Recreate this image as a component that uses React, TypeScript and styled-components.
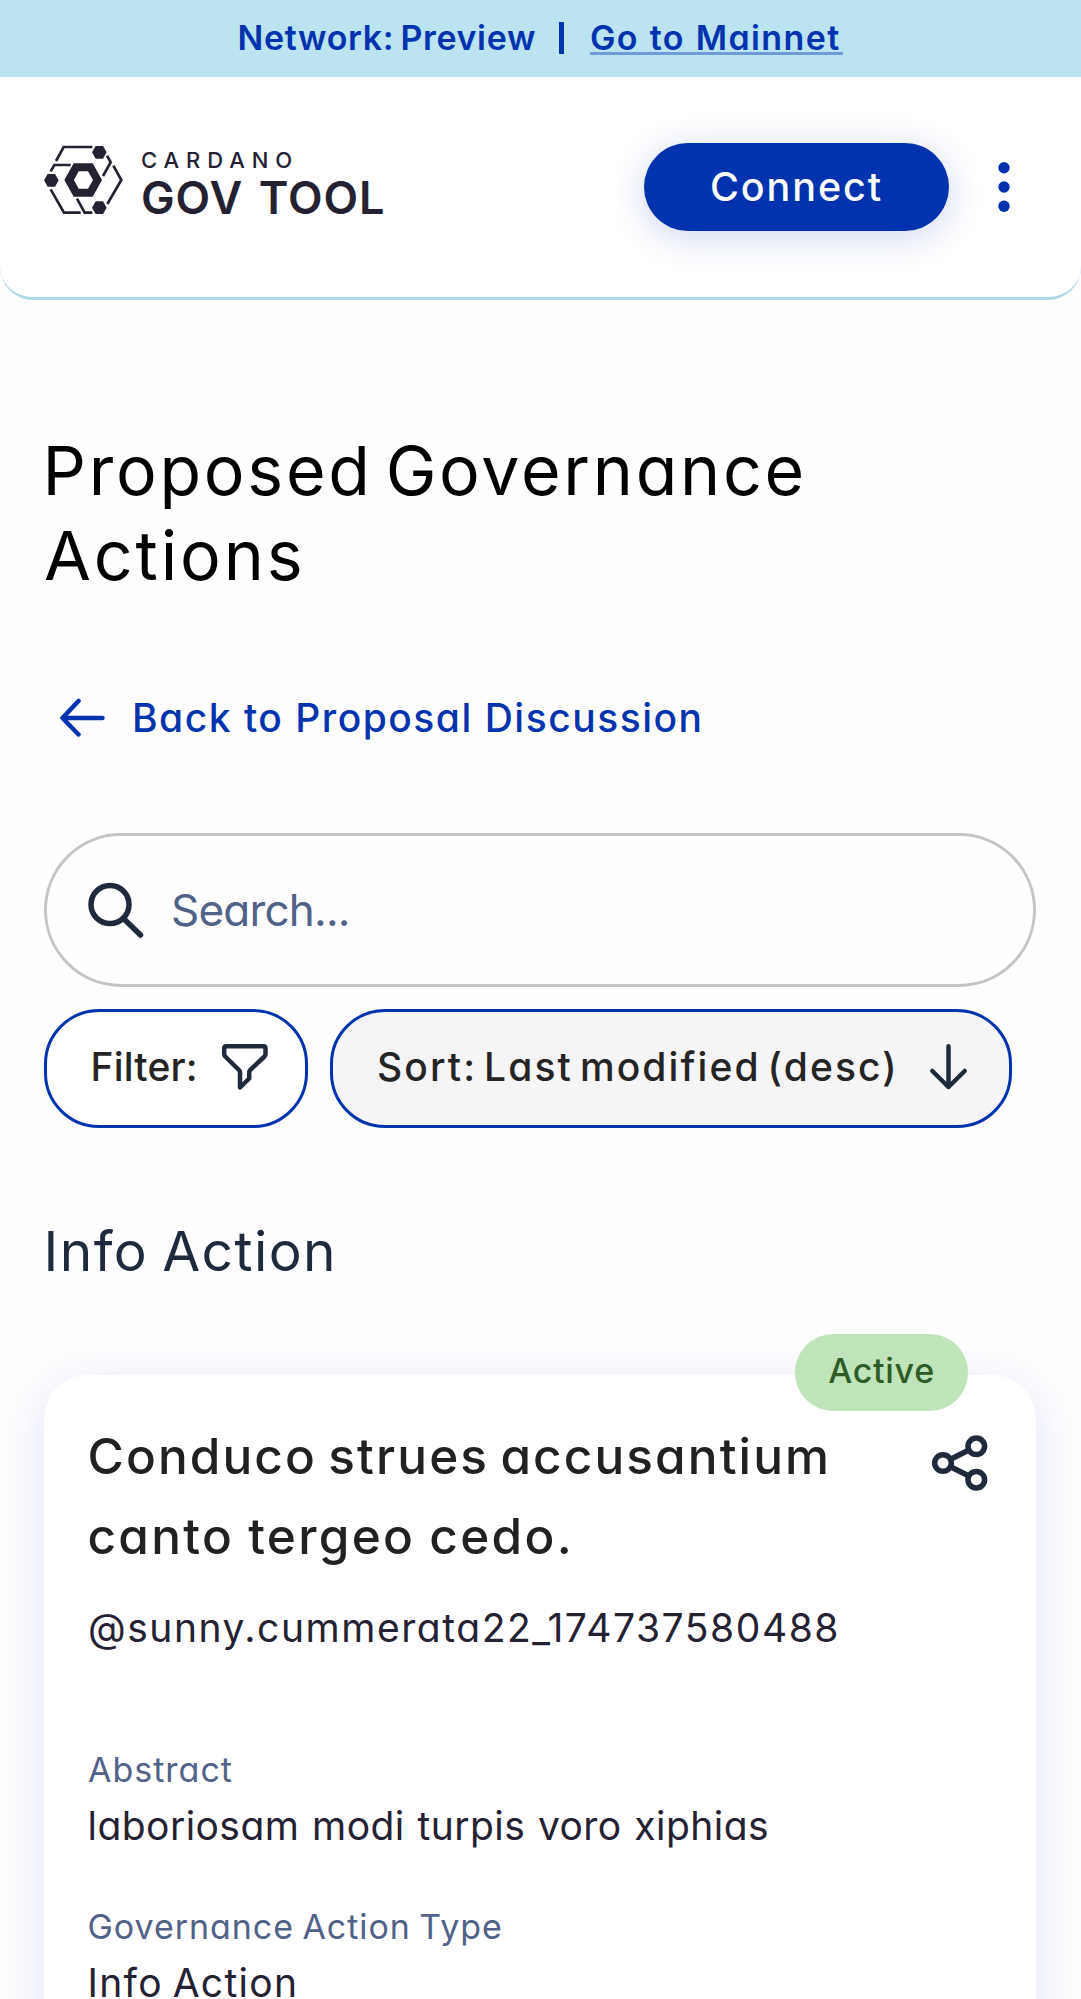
import React from "react";
import styled, { createGlobalStyle } from "styled-components";

const navy = "#1f2a3d";
const blue = "#0033ad";
const ink = "#242232";
const muted = "#506288";

const GlobalStyle = createGlobalStyle`
  *, *::before, *::after { box-sizing: border-box; }
  body { margin: 0; background: #fff; }
  h1, h2, h3, p { margin: 0; font-weight: 400; }
  button { border: 0; background: none; padding: 0; font: inherit; color: inherit; }
`;

const Page = styled.div`
  width: 1081px;
  height: 1999px;
  overflow: hidden;
  background: #fefefe;
  color: ${ink};
  font-family: Inter, "Liberation Sans", sans-serif;
  font-feature-settings: "cv11" 1, "calt" 0;
  font-optical-sizing: none;
`;

interface TextProps {
  $size: number;
  $line: number;
  $track?: number;
  $word?: number;
  $weight?: number;
  $color?: string;
  $outdent?: number;
}

const Text = styled.span<TextProps>`
  display: block;
  width: max-content;
  margin-left: ${(p) => -(p.$outdent ?? 0)}px;
  white-space: nowrap;
  font-size: ${(p) => p.$size}px;
  line-height: ${(p) => p.$line}px;
  letter-spacing: ${(p) => p.$track ?? 0}px;
  word-spacing: ${(p) => p.$word ?? 0}px;
  font-weight: ${(p) => p.$weight ?? 400};
  color: ${(p) => p.$color ?? "inherit"};
`;

const Banner = styled.div`
  height: 77px;
  padding-left: 237px;
  padding-bottom: 1px;
  display: flex;
  align-items: center;
  background: #bbe3f0;
  color: ${blue};
`;
const BannerLabel = styled.div`
  width: 300px;
`;
const Divider = styled.span`
  width: 5px;
  height: 32px;
  margin: 0 26px 0 22px;
  background: ${blue};
`;
const MainnetLink = styled.a`
  width: 253px;
  height: 33px;
  border-bottom: 3px solid #6f9bd7;
`;

const Header = styled.header`
  height: 223px;
  padding: 0 44px;
  display: flex;
  align-items: center;
  background: #fff;
  border-bottom: 3px solid #add8e6;
  border-radius: 0 0 33px 33px;
`;
const Logo = styled.div`
  display: flex;
  gap: 18px;
  margin-top: -10px;
  margin-right: auto;
`;
const Wordmark = styled.div`
  display: flex;
  flex-direction: column;
`;
const ConnectButton = styled.button`
  width: 305px;
  height: 88px;
  display: flex;
  align-items: center;
  justify-content: center;
  border-radius: 44px;
  background: ${blue};
  color: #fff;
  box-shadow: 0 6px 36px rgba(0, 51, 173, 0.2);
`;
const MenuButton = styled.button`
  width: 66px;
  height: 66px;
  margin-left: 22px;
`;

const Main = styled.main`
  padding: 128px 45px 0 44px;
  display: flex;
  flex-direction: column;
`;
const PageTitle = styled.h1`
  color: #000;
`;
const BackLink = styled.a`
  height: 88px;
  margin-top: 76px;
  padding-left: 15px;
  display: flex;
  align-items: center;
  gap: 25px;
  color: ${blue};
`;
const SearchBox = styled.div`
  height: 154px;
  margin-top: 71px;
  padding-left: 41px;
  display: flex;
  align-items: center;
  gap: 26px;
  border: 3px solid #c4c4c4;
  border-radius: 77px;
`;
const Controls = styled.div`
  display: flex;
  gap: 22px;
  margin-top: 22px;
`;
const Pill = styled.button<{ $width: number; $filled?: boolean }>`
  width: ${(p) => p.$width}px;
  height: 119px;
  padding: 0 37px 3px 44px;
  display: flex;
  align-items: center;
  justify-content: space-between;
  border: 3px solid ${blue};
  border-radius: 55px;
  background: ${(p) => (p.$filled ? "#f5f5f5" : "#fff")};
  color: #242424;
`;
const SectionTitle = styled.h2`
  margin-top: 90px;
  color: ${navy};
`;
const Card = styled.article`
  position: relative;
  height: 900px;
  margin-top: 91px;
  padding: 41px 44px;
  border-radius: 44px;
  background: #fff;
  box-shadow: 0 11px 50px rgba(47, 82, 220, 0.15);
`;
const Badge = styled.span`
  position: absolute;
  top: -41px;
  right: 68px;
  width: 173px;
  height: 77px;
  padding-bottom: 3px;
  display: flex;
  align-items: center;
  justify-content: center;
  border-radius: 38px;
  background: #c0e4ba;
`;
const CardHead = styled.div`
  display: flex;
  justify-content: space-between;
  align-items: flex-start;
`;
const ShareButton = styled.button`
  width: 66px;
  height: 66px;
  margin: 14px -1px 0 0;
`;
const Author = styled.p`
  margin-top: 24px;
`;
const Field = styled.div<{ $gap: number }>`
  display: flex;
  flex-direction: column;
  gap: 6px;
  margin-top: ${(p) => p.$gap}px;
`;
const Glyph = styled.svg`
  display: block;
  flex: none;
  fill: none;
  stroke-linecap: round;
  stroke-linejoin: round;
`;

const LogoMark = () => (
  <Glyph width="79" height="69" viewBox="42 45 237 207">
    <g fill={ink}>
      <path fillRule="evenodd" d="M103 150L131 100H188L216 150L188 200H131ZM132 150L146 176H174L189 150L174 124H146Z" />
      <path d="M42 151L53 132H75L86 151L75 170H53Z" />
      <path d="M186 67L197 48H219L230 67L219 86H197Z" />
      <path d="M186 233L197 214H219L230 233L219 252H197Z" />
    </g>
    <g stroke={ink} strokeWidth="8" strokeLinecap="butt" strokeLinejoin="miter">
      <path d="M78 93L101 51H187" />
      <path d="M62 124L73 105H122" />
      <path d="M231 77L242 97L219 138" />
      <path d="M250 107L274 150L232 222" />
      <path d="M62 178L102 248H152" />
      <path d="M141 206L164 248H187" />
    </g>
  </Glyph>
);

export default function App() {
  return (
    <Page>
      <GlobalStyle />
      <Banner>
        <BannerLabel>
          <Text $size={34} $line={44} $weight={600} $track={0.65} $word={-3} $outdent={-0.5}>Network: Preview</Text>
        </BannerLabel>
        <Divider />
        <MainnetLink>
          <Text $size={34} $line={32} $weight={600} $track={1.4} $word={0.8}>Go to Mainnet</Text>
        </MainnetLink>
      </Banner>
      <Header>
        <Logo>
          <LogoMark />
          <Wordmark>
            <Text $size={22} $line={30} $weight={500} $track={6.9}>CARDANO</Text>
            <Text $size={45} $line={45} $weight={600} $track={0.9} $word={3.5}>GOV TOOL</Text>
          </Wordmark>
        </Logo>
        <ConnectButton>
          <Text $size={39.5} $line={48} $weight={500} $track={1.9}>Connect</Text>
        </ConnectButton>
        <MenuButton aria-label="Menu">
          <Glyph width="66" height="66" viewBox="0 0 66 66">
            <g fill={blue}>
              <circle cx="33" cy="13.7" r="5.7" />
              <circle cx="33" cy="33" r="5.7" />
              <circle cx="33" cy="52.3" r="5.7" />
            </g>
          </Glyph>
        </MenuButton>
      </Header>
      <Main>
        <PageTitle>
          <Text $size={68} $line={85} $track={2.75} $word={-9} $outdent={1.5}>Proposed Governance</Text>
          <Text $size={68} $line={85} $track={2.9}>Actions</Text>
        </PageTitle>
        <BackLink>
          <Glyph width="48" height="40" viewBox="0 0 48 40" stroke={blue} strokeWidth="4.5">
            <path d="M43.500 20H4M19.500 3L3.500 20L19.500 36.500" />
          </Glyph>
          <Text $size={39} $line={48} $weight={500} $track={1.5}>Back to Proposal Discussion</Text>
        </BackLink>
        <SearchBox>
          <Glyph width="57" height="57" viewBox="0 0 57 57" stroke={navy} strokeWidth="5.5">
            <circle cx="22" cy="22.500" r="19" />
            <path d="M36 37L52.500 53" />
          </Glyph>
          <Text $size={44} $line={56} $track={-0.8} $color={muted}>Search...</Text>
        </SearchBox>
        <Controls>
          <Pill $width={264}>
            <Text $size={39} $line={48} $weight={500} $track={0.2} $outdent={0.5}>Filter:</Text>
            <Glyph width="48" height="48" viewBox="0 0 48 48" stroke={navy} strokeWidth="4.500">
              <path d="M6.200 3.200H43.500Q45.500 3.200 45.500 5.200V11Q45.500 12.500 44.500 13.500L30.200 27Q29.200 28 29.200 29.500V35.500L20 44.500V29.500Q20 28 19 27L5.200 13.500Q4.200 12.500 4.200 11V5.200Q4.200 3.200 6.200 3.200Z" />
            </Glyph>
          </Pill>
          <Pill $width={682} $filled>
            <Text $size={39} $line={48} $weight={500} $track={2.1} $word={-5.5}>Sort: Last modified (desc)</Text>
            <Glyph width="48" height="48" viewBox="0 0 48 48" stroke={navy} strokeWidth="4.500">
              <path d="M24.500 3.200V44M8.300 28L24.500 44L40.700 28" />
            </Glyph>
          </Pill>
        </Controls>
        <SectionTitle>
          <Text $size={55} $line={66} $track={1.45} $word={-3} $outdent={0.5}>Info Action</Text>
        </SectionTitle>
        <Card>
          <Badge>
            <Text $size={34} $line={44} $weight={500} $track={0.7} $color="#2e5c26">Active</Text>
          </Badge>
          <CardHead>
            <h3>
              <Text $size={49.5} $line={80} $weight={500} $track={2.1} $word={-4} $outdent={0.5} $color="#212121">Conduco strues accusantium</Text>
              <Text $size={49.5} $line={80} $weight={500} $track={2.3} $word={-1.5} $outdent={0.5} $color="#212121">canto tergeo cedo.</Text>
            </h3>
            <ShareButton aria-label="Share">
              <Glyph width="66" height="66" viewBox="0 0 66 66" stroke={navy} strokeWidth="5.500">
                <circle cx="16" cy="33" r="8.300" />
                <circle cx="49.300" cy="16.300" r="8.300" />
                <circle cx="49.300" cy="49.700" r="8.300" />
                <path d="M24 29L41 20.500M24 37L41 45.500" />
              </Glyph>
            </ShareButton>
          </CardHead>
          <Author>
            <Text $size={39} $line={56} $track={1.55}>@sunny.cummerata22_174737580488</Text>
          </Author>
          <Field $gap={92}>
            <Text $size={34} $line={44} $track={1} $color={muted}>Abstract</Text>
            <Text $size={39} $line={56} $track={0.45} $word={1.3} $outdent={0.5}>laboriosam modi turpis voro xiphias</Text>
          </Field>
          <Field $gap={51}>
            <Text $size={34} $line={44} $track={0.95} $word={-2} $outdent={0.5} $color={muted}>Governance Action Type</Text>
            <Text $size={39} $line={56} $track={1.3} $word={-2.5} $outdent={0.5}>Info Action</Text>
          </Field>
        </Card>
      </Main>
    </Page>
  );
}
